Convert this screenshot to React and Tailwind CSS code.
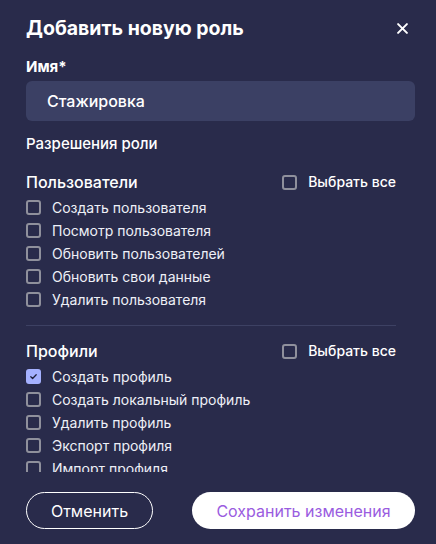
import { useState } from 'react';

const groups = [
  {
    title: 'Пользователи',
    items: [
      'Создать пользователя',
      'Посмотр пользователя',
      'Обновить пользователей',
      'Обновить свои данные',
      'Удалить пользователя',
    ],
  },
  {
    title: 'Профили',
    items: [
      'Создать профиль',
      'Создать локальный профиль',
      'Удалить профиль',
      'Экспорт профиля',
      'Импорт профиля',
    ],
  },
];

function Checkbox({ checked, onChange }) {
  return (
    <button
      type="button"
      onClick={onChange}
      className={
        checked
          ? 'w-[15px] h-[15px] shrink-0 rounded-[3px] bg-[#a5b1ff] flex items-center justify-center'
          : 'w-[15px] h-[15px] shrink-0 rounded-[3px] border-2 border-[#8f909c]'
      }
    >
      {checked && (
        <svg width="9" height="9" viewBox="0 0 10 10" fill="none">
          <path d="M2 5.2l2 2L8 3" stroke="#1d1f3a" strokeWidth="1.4" strokeLinecap="round" strokeLinejoin="round" />
        </svg>
      )}
    </button>
  );
}

export default function App() {
  const [checked, setChecked] = useState({ 'Создать профиль': true });

  const toggle = (key) => setChecked((prev) => ({ ...prev, [key]: !prev[key] }));

  return (
    <div
      className="w-[436px] h-[544px] bg-[#292b4b] text-white flex flex-col overflow-hidden"
      style={{ fontFamily: 'Inter, "Noto Sans", sans-serif' }}
    >
      <div className="flex items-center justify-between pl-[26px] pr-[28px] pt-[14px]">
        <h1 className="text-[19.5px] leading-[28px] font-bold">Добавить новую роль</h1>
        <button type="button" className="text-white">
          <svg width="11" height="11" viewBox="0 0 10 10" fill="none">
            <path d="M1 1l8 8M9 1l-8 8" stroke="white" strokeWidth="1.8" strokeLinecap="round" />
          </svg>
        </button>
      </div>

      <div className="flex-1 overflow-hidden px-[26px] pr-[21px]">
        <div className="mt-[15px] text-[15px] leading-[20px] font-bold">Имя*</div>
        <div className="mt-[4px] h-[40px] rounded-[6px] bg-[#3b4064] flex items-center px-[21px] text-[16px] font-medium">
          Стажировка
        </div>
        <div className="mt-[13px] text-[15px] leading-[20px] font-medium">Разрешения роли</div>

        {groups.map((group, gi) => {
          const allChecked = group.items.every((it) => checked[it]);
          return (
            <div key={group.title} className="w-[370px]">
              {gi > 0 && <div className="mt-[14px] mb-[14px] h-px bg-[#3d4163]" />}
              <div className={gi === 0 ? 'mt-[17px] flex items-start justify-between' : 'flex items-start justify-between'}>
                <span className="text-[16px] leading-[22px] font-medium">{group.title}</span>
                <label className="flex items-center gap-[11px] mt-[2px] text-[14px] leading-[18px] font-medium">
                  <Checkbox
                    checked={allChecked}
                    onChange={() => {
                      const next = { ...checked };
                      group.items.forEach((it) => (next[it] = !allChecked));
                      setChecked(next);
                    }}
                  />
                  Выбрать все
                </label>
              </div>
              <div className="mt-[3px] flex flex-col">
                {group.items.map((item) => (
                  <label key={item} className="h-[23px] flex items-center gap-[11px] text-[14px] text-[#eef0f7]">
                    <Checkbox checked={!!checked[item]} onChange={() => toggle(item)} />
                    {item}
                  </label>
                ))}
              </div>
            </div>
          );
        })}
      </div>

      <div className="flex items-center gap-[39px] px-[26px] pr-[21px] pt-[20px] pb-[15px] h-[72px] shrink-0">
        <button
          type="button"
          className="w-[127px] h-[37px] rounded-full border border-white text-[16px]"
        >
          Отменить
        </button>
        <button
          type="button"
          className="w-[223px] h-[37px] rounded-full bg-white text-[#9a5ce0] text-[16px]"
        >
          Сохранить изменения
        </button>
      </div>
    </div>
  );
}
